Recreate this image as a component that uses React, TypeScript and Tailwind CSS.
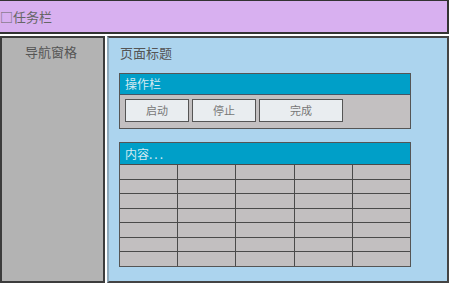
import React from "react";

const font = { fontFamily: '"Noto Sans CJK SC", "Noto Sans", sans-serif' };

export default function App() {
  const cells = Array.from({ length: 35 });
  return (
    <div
      className="w-[449px] h-[283px] bg-white flex flex-col overflow-hidden"
      style={font}
    >
      <div className="h-[34px] shrink-0 bg-[#d8b0f0] border-t border-r-2 border-b-2 border-[#333] flex items-center text-[13px] text-[#666] leading-none">
        □任务栏
      </div>
      <div className="flex flex-1 mt-[2px] gap-[2px] min-h-0">
        <div className="w-[105px] shrink-0 border-2 border-[#3c3c3c] bg-[#b3b3b3] pt-[5px] pr-[3px] text-center text-[13px] leading-[18px] text-[#555]">
          导航窗格
        </div>
        <div className="flex-1 border-2 border-[#444] border-l-[#8ea9bb] bg-[#acd4ee] px-[10px] pt-[6px]">
          <div className="pl-px text-[13px] leading-[18px] text-[#555]">页面标题</div>
          <div className="mt-[11px] w-[292px] border border-[#555]">
            <div className="h-[21px] bg-[#009fc8] border-b border-[#456] flex items-center pl-[5px] text-[12px] text-[#d4eaf2]">
              操作栏
            </div>
            <div className="bg-[#c3c0c1] pt-[4px] pb-[6px] pl-[5px] flex gap-[3px]">
              <button className="w-[64px] h-[23px] bg-[#e9edf0] border border-[#555] text-[11px] text-[#777]">
                启动
              </button>
              <button className="w-[64px] h-[23px] bg-[#e9edf0] border border-[#555] text-[11px] text-[#777]">
                停止
              </button>
              <button className="w-[84px] h-[23px] bg-[#e9edf0] border border-[#555] text-[11px] text-[#777]">
                完成
              </button>
            </div>
          </div>
          <div className="mt-[13px] w-[292px] border border-[#555]">
            <div className="h-[21px] bg-[#009fc8] flex items-center pl-[5px] text-[12px] text-[#d4eaf2]">
              内容<span className="tracking-[2px]">...</span>
            </div>
            <div className="grid grid-cols-5 grid-rows-7 gap-px bg-[#4a4a4a] border-t border-[#4a4a4a] h-[102px]">
              {cells.map((_, i) => (
                <div key={i} className="bg-[#c2bfc0]" />
              ))}
            </div>
          </div>
        </div>
      </div>
    </div>
  );
}
